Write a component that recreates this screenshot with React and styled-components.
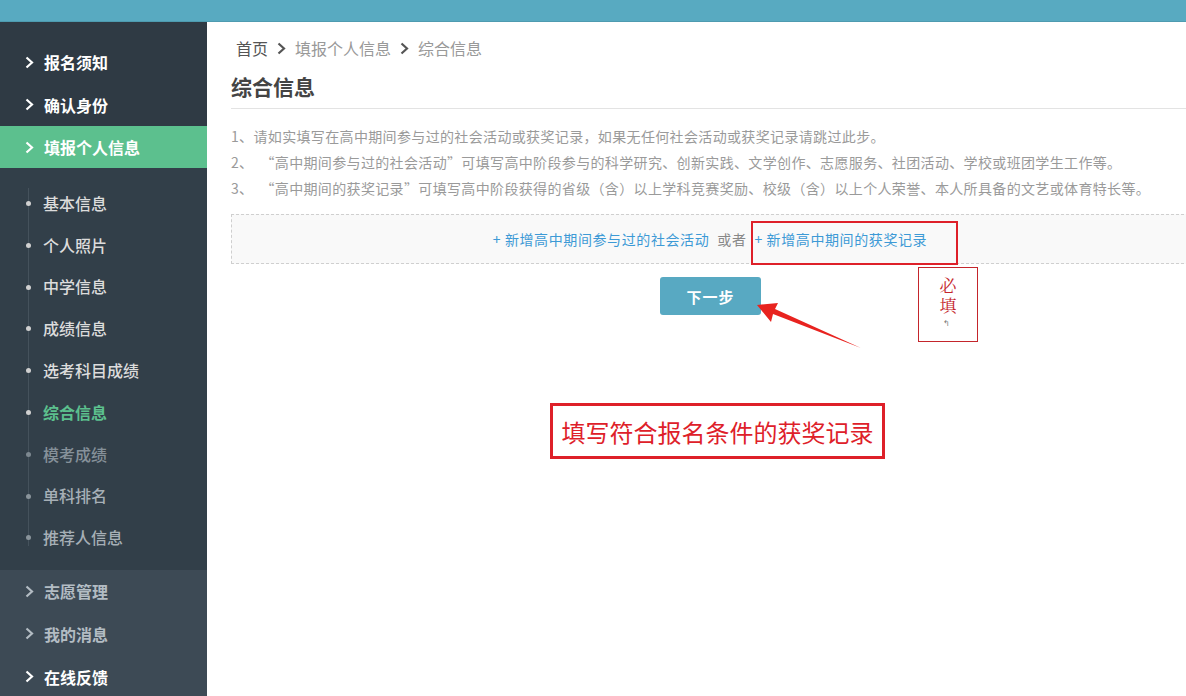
import React from 'react'
import styled, { createGlobalStyle } from 'styled-components'

const GlobalStyle = createGlobalStyle`
  html, body {
    margin: 0;
    padding: 0;
    background: #fff;
    font-family: "Noto Sans CJK SC", "Noto Sans", sans-serif;
  }
`

const Page = styled.div`
  width: 1186px;
  height: 696px;
  overflow: hidden;
  display: flex;
  flex-direction: column;
`

const TopBar = styled.div`
  height: 21px;
  flex: none;
  background: #58aac1;
  border-bottom: 1px solid #4e9bb0;
`

const Body = styled.div`
  flex: 1;
  display: flex;
  min-height: 0;
`

const Sidebar = styled.nav`
  width: 207px;
  flex: none;
  display: flex;
  flex-direction: column;
  background: #2f3b45;
`

const TopGroup = styled.div`
  padding-top: 19px;
  background: #2f3a44;
`

const MenuItem = styled.div`
  height: ${p => p.h || 42}px;
  display: flex;
  align-items: center;
  padding-left: 25px;
  gap: 10px;
  font-size: 16px;
  font-weight: ${p => (p.bold ? 700 : 500)};
  color: ${p => p.color || '#fff'};
  background: ${p => p.bg || 'transparent'};
`

const Chevron = styled.span`
  width: 9px;
  display: inline-flex;
  svg { display: block; }
`

const SubGroup = styled.div`
  position: relative;
  padding: 14px 0 12px;
  background: #323f49;
  &::before {
    content: '';
    position: absolute;
    left: 28px;
    top: 20px;
    bottom: 24px;
    border-left: 1px solid #45525c;
  }
`

const SubItem = styled.div`
  position: relative;
  height: 41.8px;
  display: flex;
  align-items: center;
  padding-left: 43px;
  font-size: 16px;
  font-weight: ${p => (p.active ? 700 : 500)};
  color: ${p => p.color};
  &::before {
    content: '';
    position: absolute;
    left: 26px;
    top: 19px;
    width: 5px;
    height: 5px;
    border-radius: 50%;
    background: ${p => p.dot};
  }
`

const LowerGroup = styled.div`
  flex: 1;
  background: #3d4a55;
`

const Main = styled.main`
  flex: 1;
  position: relative;
  padding: 12px 0 0 24px;
  overflow: hidden;
`

const Crumbs = styled.div`
  display: flex;
  align-items: center;
  gap: 9px;
  height: 28px;
  padding-left: 5px;
  font-size: 16px;
  color: #999;
`

const CrumbHome = styled.span`
  color: #555;
`

const Title = styled.h2`
  margin: 0;
  width: 958px;
  height: 47px;
  padding-top: 9px;
  line-height: 30px;
  font-size: 21px;
  font-weight: 700;
  color: #444;
  border-bottom: 1px solid #e3e3e3;
  box-sizing: border-box;
`

const Notes = styled.ol`
  list-style: none;
  margin: 14px 0 0;
  padding: 0;
`

const Note = styled.li`
  height: 26px;
  line-height: 26px;
  font-size: 14px;
  letter-spacing: 0.35px;
  color: #9a9a9a;
  white-space: nowrap;
`

const AddBox = styled.div`
  margin-top: 13px;
  width: 958px;
  height: 50px;
  box-sizing: border-box;
  border: 1px dashed #cfcfcf;
  background: #f9f9f9;
  display: flex;
  align-items: center;
  justify-content: center;
  gap: 8px;
  font-size: 14px;
  letter-spacing: 0.6px;
  color: #888;
`

const AddLink = styled.a`
  color: #3d9ad6;
  text-decoration: none;
`

const ButtonRow = styled.div`
  width: 958px;
  display: flex;
  justify-content: center;
  margin-top: 13px;
`

const NextButton = styled.button`
  width: 101px;
  height: 38px;
  border: none;
  border-radius: 3px;
  background: #58a9c2;
  color: #fff;
  font-size: 15px;
  font-weight: 700;
  font-family: inherit;
  letter-spacing: 1px;
  margin-left: 1px;
`

const Mark = styled.div`
  position: absolute;
  left: ${p => p.x}px;
  top: ${p => p.y}px;
  width: ${p => p.w}px;
  height: ${p => p.h}px;
  box-sizing: border-box;
  border: ${p => p.b || 2}px solid ${p => p.c || '#de2029'};
`

const RequiredNote = styled(Mark)`
  display: flex;
  flex-direction: column;
  align-items: center;
  padding-top: 7px;
  font-family: "Noto Serif CJK SC", "Liberation Serif", serif;
  color: #c4252b;
  span {
    display: block;
    width: 17px;
    font-size: 17px;
    line-height: 20px;
    word-break: break-all;
  }
  small {
    display: block;
    margin-top: 4px;
    font-size: 8px;
    line-height: 8px;
    color: #777;
    margin-left: -4px;
  }
`

const Callout = styled(Mark)`
  display: flex;
  align-items: center;
  justify-content: center;
  font-size: 24px;
  color: #de2029;
  background: #fff;
`

const Arrow = styled.svg`
  position: absolute;
  left: 530px;
  top: 268px;
  overflow: visible;
`

const chevron = (
  <svg width="9" height="13" viewBox="0 0 9 13">
    <path d="M1.5 1.5 L7 6.5 L1.5 11.5" fill="none" stroke="currentColor" strokeWidth="2.2" />
  </svg>
)

const subItems = [
  { label: '基本信息', color: '#dcdcdc', dot: '#d0d0d0' },
  { label: '个人照片', color: '#dcdcdc', dot: '#d0d0d0' },
  { label: '中学信息', color: '#dcdcdc', dot: '#d0d0d0' },
  { label: '成绩信息', color: '#dcdcdc', dot: '#d0d0d0' },
  { label: '选考科目成绩', color: '#dcdcdc', dot: '#d0d0d0' },
  { label: '综合信息', color: '#5cc08e', dot: '#d0d0d0', active: true },
  { label: '模考成绩', color: '#86919a', dot: '#7d8890' },
  { label: '单科排名', color: '#a6afb6', dot: '#8a949b' },
  { label: '推荐人信息', color: '#a6afb6', dot: '#8a949b' },
]

function App() {
  return (
    <Page>
      <GlobalStyle />
      <TopBar />
      <Body>
        <Sidebar>
          <TopGroup>
            <MenuItem bold><Chevron>{chevron}</Chevron>报名须知</MenuItem>
            <MenuItem bold h={43}><Chevron>{chevron}</Chevron>确认身份</MenuItem>
            <MenuItem bold h={42} bg="#5cc08e">
              <Chevron>{chevron}</Chevron>填报个人信息
            </MenuItem>
          </TopGroup>
          <SubGroup>
            {subItems.map(s => (
              <SubItem key={s.label} color={s.color} dot={s.dot} active={s.active}>
                {s.label}
              </SubItem>
            ))}
          </SubGroup>
          <LowerGroup>
            <MenuItem bold color="#b3bcc3"><Chevron>{chevron}</Chevron>志愿管理</MenuItem>
            <MenuItem bold h={43} color="#b3bcc3"><Chevron>{chevron}</Chevron>我的消息</MenuItem>
            <MenuItem bold h={43}><Chevron>{chevron}</Chevron>在线反馈</MenuItem>
          </LowerGroup>
        </Sidebar>

        <Main>
          <Crumbs>
            <CrumbHome>首页</CrumbHome>
            <Chevron style={{ color: '#555' }}>{chevron}</Chevron>
            <span>填报个人信息</span>
            <Chevron style={{ color: '#555' }}>{chevron}</Chevron>
            <span>综合信息</span>
          </Crumbs>
          <Title>综合信息</Title>
          <Notes>
            <Note>1、请如实填写在高中期间参与过的社会活动或获奖记录，如果无任何社会活动或获奖记录请跳过此步。</Note>
            <Note>2、&nbsp;&nbsp;“高中期间参与过的社会活动”可填写高中阶段参与的科学研究、创新实践、文学创作、志愿服务、社团活动、学校或班团学生工作等。</Note>
            <Note>3、&nbsp;&nbsp;“高中期间的获奖记录”可填写高中阶段获得的省级（含）以上学科竞赛奖励、校级（含）以上个人荣誉、本人所具备的文艺或体育特长等。</Note>
          </Notes>
          <AddBox>
            <AddLink>+ 新增高中期间参与过的社会活动</AddLink>
            <span>或者</span>
            <AddLink>+ 新增高中期间的获奖记录</AddLink>
          </AddBox>
          <ButtonRow>
            <NextButton>下一步</NextButton>
          </ButtonRow>

          <Mark x={544} y={199} w={207} h={44} />
          <RequiredNote x={711} y={245} w={60} h={75} b={1.5} c="#c4252b">
            <span>必填</span>
            <small>↰</small>
          </RequiredNote>
          <Arrow width="120" height="70" viewBox="0 0 120 70">
            <path d="M124 58 L38 19 L41 13 L20 15 L34 32 L36 24 Z" fill="#e8231f" />
          </Arrow>
          <Callout x={343} y={381} w={335} h={56} b={3}>
            填写符合报名条件的获奖记录
          </Callout>
        </Main>
      </Body>
    </Page>
  )
}

export default App
